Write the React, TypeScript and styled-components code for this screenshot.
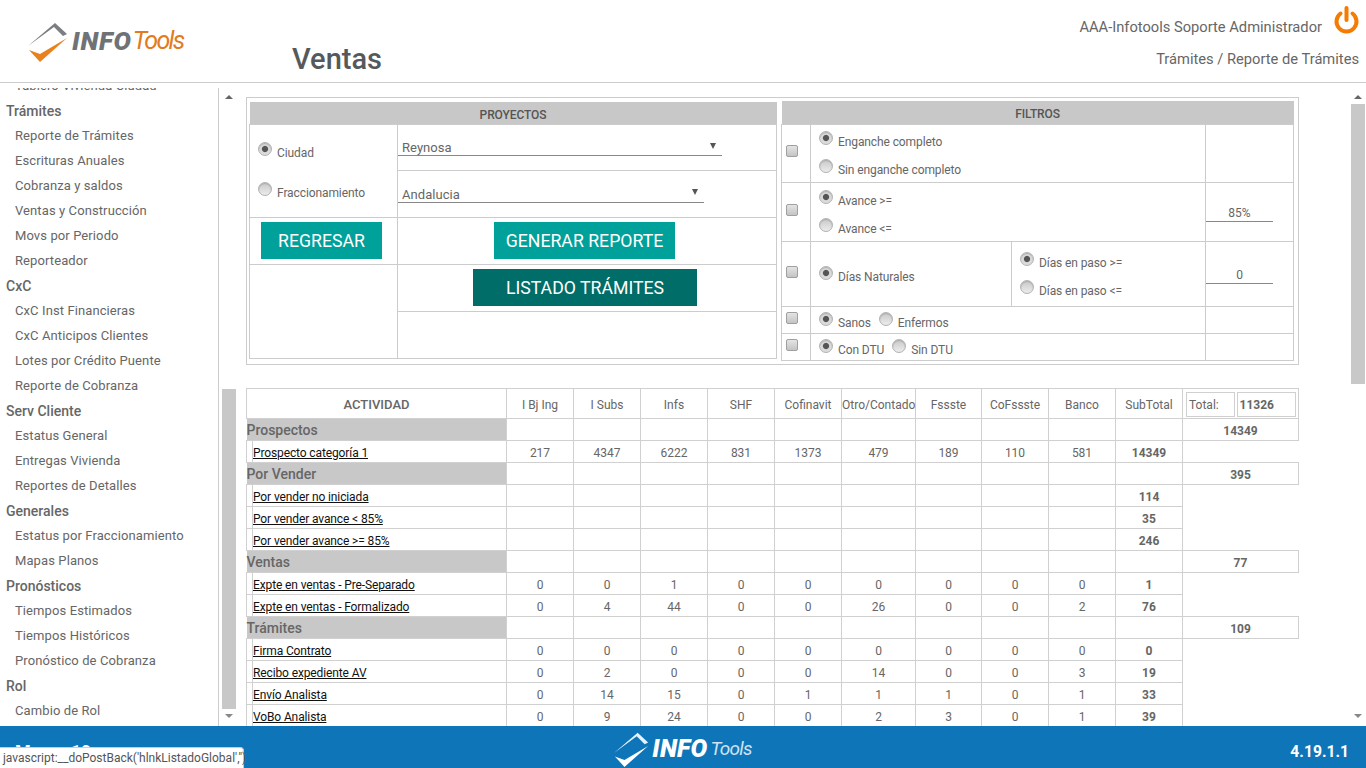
import React from 'react';
import styled, { createGlobalStyle } from 'styled-components';

const Global = createGlobalStyle`
  html, body { margin: 0; height: 100%; overflow: hidden; background: #fff; }
  body { font-family: Roboto, "Liberation Sans", sans-serif; color: #666; }
  #root { height: 100%; }
  * { box-sizing: border-box; }
`;

const Page = styled.div`
  height: 768px; display: flex; flex-direction: column; position: relative; overflow: hidden;
`;
const Header = styled.header`
  height: 83px; flex: none; display: flex; border-bottom: 1px solid #ccc;
`;
const LogoBox = styled.div`
  width: 292px; flex: none; padding: 21px 0 0 28px;
`;
const LogoRow = styled.div`
  display: flex; align-items: center; height: 40px;
`;
const LogoInfo = styled.span<{ $light?: boolean }>`
  font: italic 900 ${p => p.$light ? 25 : 26}px Roboto, "Liberation Sans", sans-serif;
  letter-spacing: ${p => p.$light ? 0.2 : 0.8}px; color: ${p => p.$light ? '#fff' : '#6f7377'}; margin-left: ${p => p.$light ? 3 : 4}px; line-height: 40px;
`;
const LogoTools = styled.span<{ $light?: boolean }>`
  font: italic 400 ${p => p.$light ? 19 : 25}px Roboto, "Liberation Sans", sans-serif;
  letter-spacing: ${p => p.$light ? -0.8 : -1.7}px; color: ${p => p.$light ? '#cfe3f2' : '#e07b20'}; margin-left: ${p => p.$light ? 3 : 1}px; line-height: 40px;
`;
const Title = styled.h1`
  flex: 1; margin: 41px 0 0; font-size: 29px; font-weight: 500; line-height: 36px; color: #55595c;
`;
const UserBox = styled.div`
  display: flex; flex-direction: column; align-items: flex-end; padding: 6px 7px 0 0;
`;
const UserRow = styled.div`
  display: flex; align-items: flex-start; gap: 12px; font-size: 14.7px; height: 37px; line-height: 42px;
`;
const Crumb = styled.div`
  font-size: 14.7px; line-height: 20px; margin-top: 6px;
`;

const Body = styled.div`
  flex: 1; display: flex; min-height: 0;
`;
const Sidebar = styled.nav`
  width: 219px; flex: none; overflow: hidden; border-right: 1px solid #ccc; margin-top: 5px;
`;
const SideList = styled.div`
  margin-top: -15px;
`;
const SideGroup = styled.div`
  height: 25px; line-height: 26px; font-size: 14px; font-weight: 500; padding-left: 6px; color: #666;
`;
const SideItem = styled.div`
  height: 25px; line-height: 25px; font-size: 13px; padding-left: 15px; letter-spacing: .1px; color: #666;
`;

const Scroll = styled.div<{ $w: number; $left?: number }>`
  width: ${p => p.$w}px; flex: none; display: flex; flex-direction: column; align-items: stretch;
  padding: 7px ${p => p.$left ? 0 : 1}px 3px ${p => p.$left ?? 0}px;
`;
const ScrollArrow = styled.div<{ $up?: boolean }>`
  height: 14px; flex: none; display: flex; justify-content: center; align-items: center;
  &::after {
    content: ''; border-left: 4px solid transparent; border-right: 4px solid transparent;
    ${p => p.$up ? 'border-bottom: 4px solid #666;' : 'border-top: 4px solid #888;'}
  }
`;
const ScrollGap = styled.div<{ $h: number; $grow?: boolean }>`
  height: ${p => p.$h}px; ${p => p.$grow ? 'flex: 1;' : 'flex: none;'}
`;
const ScrollThumb = styled.div<{ $h: number }>`
  height: ${p => p.$h}px; flex: none; background: #c8c8c8;
`;

const Main = styled.main`
  flex: 1; min-width: 0; overflow: hidden; padding: 14px 0 0 10px;
`;
const Outer = styled.div`
  width: 1053px; height: 268px; border: 1px solid #ccc; display: flex; gap: 4px; padding: 4px 4px 0 2px;
`;
const PanelTable = styled.table<{ $w: number; $raised?: boolean }>`
  width: ${p => p.$w}px; border-collapse: collapse; table-layout: fixed; height: fit-content; flex: none;
  font-size: 12px; color: #666; ${p => p.$raised ? 'margin-top: -1px;' : ''}
`;
const PanelHead = styled.th<{ $h: number; $drop: number }>`
  background: #c8c8c8; height: ${p => p.$h}px; padding: ${p => p.$drop}px 0 0; line-height: 14px; font-size: 12px; letter-spacing: -.1px; font-weight: 500; color: #555; text-align: center;
`;
const Cell = styled.td<{ $h?: number; $shift?: number }>`
  border: 1px solid #ccc; padding: 0 ${p => p.$shift ?? 0}px 0 0; vertical-align: middle; text-align: left;
  ${p => p.$h ? `height: ${p.$h}px;` : ''}
`;
const RadioStack = styled.div<{ $gap: number; $drop?: number }>`
  display: flex; flex-direction: column; gap: ${p => p.$gap}px; padding: ${p => p.$drop ?? 2}px 0 0 9px;
`;
const RadioInline = styled.div`
  display: flex; gap: 9px; padding: 2px 0 0 9px;
`;
const Choice = styled.label`
  display: inline-flex; align-items: flex-end; gap: 5px; height: 18px; line-height: 13px; font-size: 12px; letter-spacing: -.1px; color: #666;
`;
const RadioInput = styled.input`
  appearance: none; width: 14px; height: 14px; margin: 0 0 4px -1px; border-radius: 50%; flex: none;
  border: 1px solid #b4b4b4; background: linear-gradient(#c9c9c9, #ececec);
  box-shadow: inset 0 1px 1px #aaa;
  &:checked { background: radial-gradient(circle, #555 0 2.6px, #d8d8d8 3.6px, #e4e4e4 100%); }
`;
const CheckBoxInput = styled.input`
  appearance: none; display: block; width: 12px; height: 12px; margin: -4px 0 0 4px; border-radius: 2px;
  border: 1px solid #a0a0a0; background: linear-gradient(#e4e4e4, #c4c4c4);
`;
const SelectBox = styled.div<{ $w: number }>`
  width: ${p => p.$w}px; height: 18px; border-bottom: 1px solid #888; display: flex; align-items: center; justify-content: space-between;
  padding: 2px 6px 0 4px; font-size: 13px; letter-spacing: .05px; color: #666;
`;
const SelectArrow = styled.span`
  width: 0; height: 0; border-left: 3px solid transparent; border-right: 3px solid transparent; border-top: 6px solid #555; margin-bottom: 4px;
`;
const Action = styled.button<{ $w: number; $dark?: boolean }>`
  width: ${p => p.$w}px; height: 37px; border: 0; padding: 0; display: block; margin: 0 auto;
  background: ${p => p.$dark ? '#006d68' : '#00a19a'}; color: #fff; font: 400 17.7px Roboto, sans-serif;
`;
const ValueInput = styled.div`
  width: 67px; height: 17px; line-height: 17px; text-align: center; border-bottom: 1px solid #888; font-size: 12px; color: #666; margin-top: 4px;
`;

const GridTable = styled.table`
  margin-top: 23px; width: 1052px; border-collapse: collapse; table-layout: fixed; font-size: 12px; color: #666;
`;
const Th = styled.th<{ $strong?: boolean }>`
  border: 1px solid #d0d0d0; height: 30px; padding: ${p => p.$strong ? 1 : 2}px 0 0; text-align: center;
  font-size: ${p => p.$strong ? 13 : 12}px; font-weight: ${p => p.$strong ? 500 : 400}; color: #666;
`;
const TotalTh = styled.th`
  border: 1px solid #d0d0d0; height: 30px; padding: 0; font-weight: 400; color: #666;
`;
const TotalInner = styled.div`
  display: flex; gap: 2px; padding: 2px 2px 0 3px;
`;
const TotalBox = styled.div<{ $w: number; $bold?: boolean }>`
  width: ${p => p.$w}px; height: 25px; line-height: 25px; border: 1px solid #d0d0d0; text-align: left; padding-left: 2px;
  font-weight: ${p => p.$bold ? 700 : 400}; font-size: 12px;
`;
const Td = styled.td<{ $bold?: boolean }>`
  border: 1px solid #d0d0d0; height: 22px; padding: 2px 0 0; line-height: 14px; text-align: center; font-weight: ${p => p.$bold ? 700 : 400};
`;
const GroupTd = styled.td`
  background: #c8c8c8; height: 22px; padding: 1px 0 0; vertical-align: top; font-size: 14px; font-weight: 500; color: #666; line-height: 20px;
`;
const TotalTd = styled.td`
  border: 1px solid #d0d0d0; padding: 2px 0 0; line-height: 14px; text-align: center; font-weight: 700; color: #666;
`;
const LinkTd = styled.td`
  border: 1px solid #d0d0d0; height: 22px; padding: 3px 0 0; line-height: 14px;
`;
const RowLink = styled.a`
  color: #111; text-decoration: underline; font-size: 12px; letter-spacing: -.12px;
`;
const BlankTd = styled.td`
  border: 0; padding: 0;
`;

const Footer = styled.footer`
  height: 42px; flex: none; background: #0e75b9; display: flex; align-items: center; justify-content: space-between; padding: 0 17px 0 15px; color: #fff;
`;
const FootSide = styled.div`
  width: 200px; font-size: 18px; font-weight: 700; line-height: 20px; margin-top: 10px;
`;
const FootVersion = styled(FootSide)`
  font-size: 15.7px; text-align: right;
`;
const FootLogo = styled.div`
  display: flex; align-items: center; margin: 3px 0 0 2px;
`;
const StatusTip = styled.div`
  position: absolute; left: 0; bottom: 0; width: 244px; height: 21px; background: #fff; border: 1px solid #ccc; border-left: 0; border-bottom: 0;
  border-top-right-radius: 4px; font-size: 12px; line-height: 20px; padding-left: 3px; color: #555; white-space: nowrap;
`;

const LogoMark = ({ light }: { light?: boolean }) => (
  <svg width={light ? 35 : 40} height={light ? 36 : 41} viewBox="0 0 40 41">
    <polygon points="0,25 27,2 39,13 35,15 26,6" fill={light ? '#e8f2fa' : '#7b7f83'} />
    <polygon points="1,29 12,41 39,17 12,33" fill={light ? '#fff' : '#e8821e'} />
  </svg>
);

const groups: [string, string[]][] = [
  ['Trámites', ['Reporte de Trámites', 'Escrituras Anuales', 'Cobranza y saldos', 'Ventas y Construcción', 'Movs por Periodo', 'Reporteador']],
  ['CxC', ['CxC Inst Financieras', 'CxC Anticipos Clientes', 'Lotes por Crédito Puente', 'Reporte de Cobranza']],
  ['Serv Cliente', ['Estatus General', 'Entregas Vivienda', 'Reportes de Detalles']],
  ['Generales', ['Estatus por Fraccionamiento', 'Mapas Planos']],
  ['Pronósticos', ['Tiempos Estimados', 'Tiempos Históricos', 'Pronóstico de Cobranza']],
  ['Rol', ['Cambio de Rol']],
];

const cols = ['I Bj Ing', 'I Subs', 'Infs', 'SHF', 'Cofinavit', 'Otro/Contado', 'Fssste', 'CoFssste', 'Banco'];
const widths = [6, 254, 67, 67, 67, 67, 67, 74, 66, 67, 67, 67, 116];

type Row =
  | { kind: 'group'; label: string; total: string }
  | { kind: 'row'; label: string; vals: string[]; sub: string; span?: number };

const e = Array(9).fill('');
const rows: Row[] = [
  { kind: 'group', label: 'Prospectos', total: '14349' },
  { kind: 'row', label: 'Prospecto categoría 1', vals: ['217', '4347', '6222', '831', '1373', '479', '189', '110', '581'], sub: '14349', span: 1 },
  { kind: 'group', label: 'Por Vender', total: '395' },
  { kind: 'row', label: 'Por vender no iniciada', vals: e, sub: '114', span: 3 },
  { kind: 'row', label: 'Por vender avance < 85%', vals: e, sub: '35' },
  { kind: 'row', label: 'Por vender avance >= 85%', vals: e, sub: '246' },
  { kind: 'group', label: 'Ventas', total: '77' },
  { kind: 'row', label: 'Expte en ventas - Pre-Separado', vals: ['0', '0', '1', '0', '0', '0', '0', '0', '0'], sub: '1', span: 2 },
  { kind: 'row', label: 'Expte en ventas - Formalizado', vals: ['0', '4', '44', '0', '0', '26', '0', '0', '2'], sub: '76' },
  { kind: 'group', label: 'Trámites', total: '109' },
  { kind: 'row', label: 'Firma Contrato', vals: ['0', '0', '0', '0', '0', '0', '0', '0', '0'], sub: '0', span: 4 },
  { kind: 'row', label: 'Recibo expediente AV', vals: ['0', '2', '0', '0', '0', '14', '0', '0', '3'], sub: '19' },
  { kind: 'row', label: 'Envío Analista', vals: ['0', '14', '15', '0', '1', '1', '1', '0', '1'], sub: '33' },
  { kind: 'row', label: 'VoBo Analista', vals: ['0', '9', '24', '0', '0', '2', '3', '0', '1'], sub: '39' },
];

const Radio = ({ on, label }: { on?: boolean; label: string }) => (
  <Choice><RadioInput type="radio" readOnly checked={!!on} />{label}</Choice>
);
const Check = () => <CheckBoxInput type="checkbox" readOnly />;

export default function App() {
  return (
    <Page>
      <Global />
      <Header>
        <LogoBox>
          <LogoRow>
            <LogoMark />
            <LogoInfo>INFO</LogoInfo><LogoTools>Tools</LogoTools>
          </LogoRow>
        </LogoBox>
        <Title>Ventas</Title>
        <UserBox>
          <UserRow>
            AAA-Infotools Soporte Administrador
            <svg width="25" height="28" viewBox="0 0 25 28" fill="none" stroke="#f57c00" strokeWidth="4" strokeLinecap="round">
              <path d="M12.5 2v12" />
              <path d="M6.5 7.5a10 10 0 1 0 12 0" />
            </svg>
          </UserRow>
          <Crumb>Trámites / Reporte de Trámites</Crumb>
        </UserBox>
      </Header>
      <Body>
        <Sidebar>
          <SideList>
            <SideItem>Tablero Vivienda Ciudad</SideItem>
            {groups.map(([g, items]) => (
              <React.Fragment key={g}>
                <SideGroup>{g}</SideGroup>
                {items.map(i => <SideItem key={i}>{i}</SideItem>)}
              </React.Fragment>
            ))}
          </SideList>
        </Sidebar>
        <Scroll $w={17} $left={3}>
          <ScrollArrow $up />
          <ScrollGap $h={285} />
          <ScrollThumb $h={320} />
          <ScrollGap $h={0} $grow />
          <ScrollArrow />
        </Scroll>
        <Main>
          <Outer>
            <PanelTable $w={528}>
              <colgroup><col width="148" /><col /></colgroup>
              <tbody>
                <tr><PanelHead colSpan={2} $h={22} $drop={5}>PROYECTOS</PanelHead></tr>
                <tr>
                  <Cell rowSpan={2}>
                    <RadioStack $gap={22} $drop={1}>
                      <Radio on label="Ciudad" />
                      <Radio label="Fraccionamiento" />
                    </RadioStack>
                  </Cell>
                  <Cell $h={46}><SelectBox $w={324}>Reynosa<SelectArrow /></SelectBox></Cell>
                </tr>
                <tr><Cell $h={47}><SelectBox $w={306}>Andalucia<SelectArrow /></SelectBox></Cell></tr>
                <tr>
                  <Cell $h={47} $shift={4}><Action $w={121}>REGRESAR</Action></Cell>
                  <Cell $shift={5}><Action $w={181}>GENERAR REPORTE</Action></Cell>
                </tr>
                <tr>
                  <Cell rowSpan={2} />
                  <Cell $h={47} $shift={4}><Action $w={224} $dark>LISTADO TRÁMITES</Action></Cell>
                </tr>
                <tr><Cell $h={47} /></tr>
              </tbody>
            </PanelTable>
            <PanelTable $w={512} $raised>
              <colgroup><col width="29" /><col width="201" /><col width="194" /><col width="88" /></colgroup>
              <tbody>
                <tr><PanelHead colSpan={4} $h={23} $drop={4}>FILTROS</PanelHead></tr>
                <tr>
                  <Cell $h={58}><Check /></Cell>
                  <Cell colSpan={2}>
                    <RadioStack $gap={10}>
                      <Radio on label="Enganche completo" />
                      <Radio label="Sin enganche completo" />
                    </RadioStack>
                  </Cell>
                  <Cell />
                </tr>
                <tr>
                  <Cell $h={59}><Check /></Cell>
                  <Cell colSpan={2}>
                    <RadioStack $gap={10}>
                      <Radio on label="Avance >=" />
                      <Radio label="Avance <=" />
                    </RadioStack>
                  </Cell>
                  <Cell><ValueInput>85%</ValueInput></Cell>
                </tr>
                <tr>
                  <Cell $h={65}><Check /></Cell>
                  <Cell><RadioStack $gap={0}><Radio on label="Días Naturales" /></RadioStack></Cell>
                  <Cell>
                    <RadioStack $gap={10}>
                      <Radio on label="Días en paso >=" />
                      <Radio label="Días en paso <=" />
                    </RadioStack>
                  </Cell>
                  <Cell><ValueInput>0</ValueInput></Cell>
                </tr>
                <tr>
                  <Cell $h={27}><Check /></Cell>
                  <Cell colSpan={2}><RadioInline><Radio on label="Sanos" /><Radio label="Enfermos" /></RadioInline></Cell>
                  <Cell />
                </tr>
                <tr>
                  <Cell $h={27}><Check /></Cell>
                  <Cell colSpan={2}><RadioInline><Radio on label="Con DTU" /><Radio label="Sin DTU" /></RadioInline></Cell>
                  <Cell />
                </tr>
              </tbody>
            </PanelTable>
          </Outer>
          <GridTable>
            <colgroup>{widths.map((w, i) => <col key={i} width={w} />)}</colgroup>
            <tbody>
              <tr>
                <Th colSpan={2} $strong>ACTIVIDAD</Th>
                {cols.map(c => <Th key={c}>{c}</Th>)}
                <Th>SubTotal</Th>
                <TotalTh>
                  <TotalInner>
                    <TotalBox $w={49}>Total:</TotalBox>
                    <TotalBox $w={60} $bold>11326</TotalBox>
                  </TotalInner>
                </TotalTh>
              </tr>
              {rows.map(r => r.kind === 'group' ? (
                <tr key={r.label}>
                  <GroupTd colSpan={2}>{r.label}</GroupTd>
                  {Array.from({ length: 10 }, (_, i) => <Td key={i} />)}
                  <TotalTd>{r.total}</TotalTd>
                </tr>
              ) : (
                <tr key={r.label}>
                  <LinkTd />
                  <LinkTd><RowLink>{r.label}</RowLink></LinkTd>
                  {r.vals.map((v, i) => <Td key={i}>{v}</Td>)}
                  <Td $bold>{r.sub}</Td>
                  {r.span ? <BlankTd rowSpan={r.span} /> : null}
                </tr>
              ))}
            </tbody>
          </GridTable>
        </Main>
        <Scroll $w={15}>
          <ScrollArrow $up />
          <ScrollThumb $h={280} />
          <ScrollGap $h={0} $grow />
          <ScrollArrow />
        </Scroll>
      </Body>
      <Footer>
        <FootSide>Marzo 19</FootSide>
        <FootLogo>
          <LogoMark light />
          <LogoInfo $light>INFO</LogoInfo><LogoTools $light>Tools</LogoTools>
        </FootLogo>
        <FootVersion>4.19.1.1</FootVersion>
      </Footer>
      <StatusTip>javascript:__doPostBack('hlnkListadoGlobal','')</StatusTip>
    </Page>
  );
}
